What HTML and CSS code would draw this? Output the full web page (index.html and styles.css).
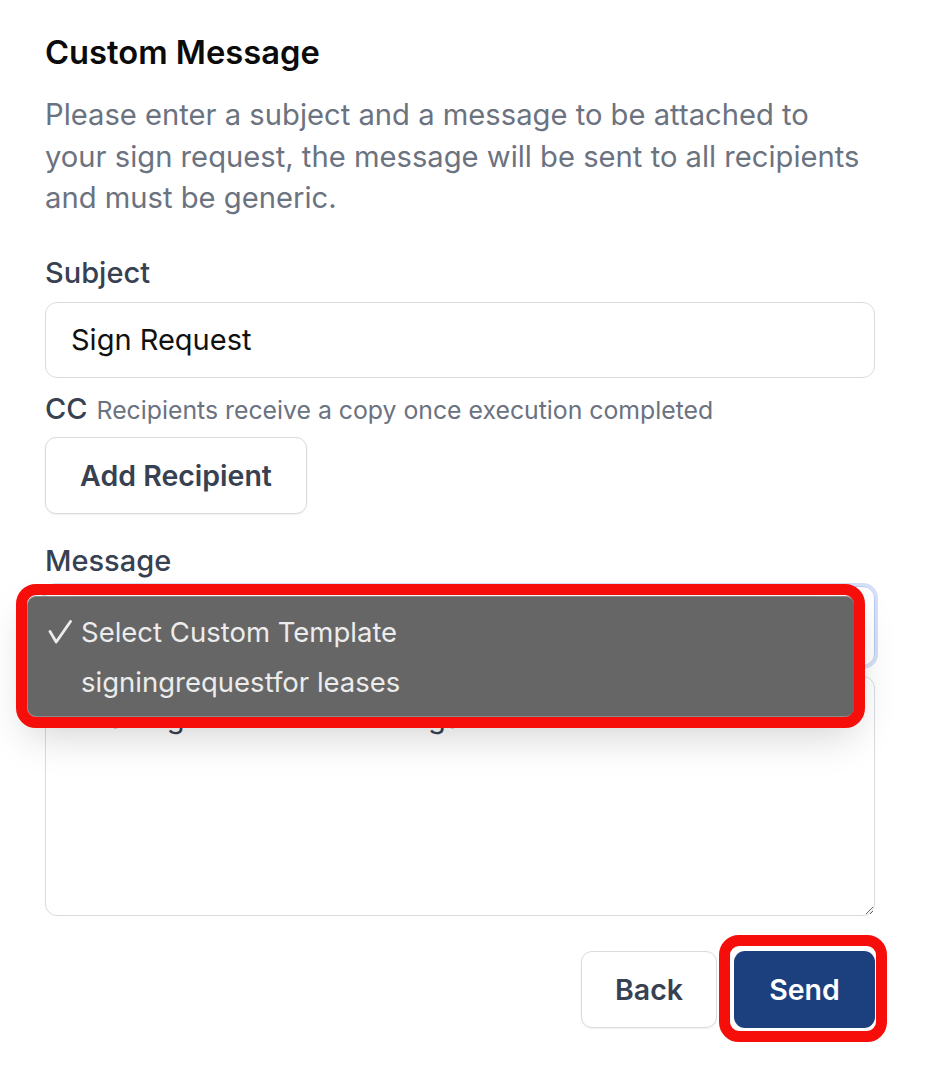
FILE: index.html
```html
<!DOCTYPE html>
<html lang="en">
<head>
  <meta charset="UTF-8">
  <title>Custom Message</title>
  <meta name="viewport" content="width=device-width, initial-scale=1.0">
  <link rel="stylesheet" href="styles.css">
</head>
<body>

<div class="panel">
  <h2>Custom Message</h2>
  <p class="desc">Please enter a subject and a message to be attached to your sign request, the message will be sent to all recipients and must be generic.</p>

  <label class="label" for="subject">Subject</label>
  <input class="input" id="subject" type="text" value="Sign Request">

  <p class="cc"><span class="cc-title">CC</span><span class="cc-hint">Recipients receive a copy once execution completed</span></p>
  <button class="btn btn-light add-btn">Add Recipient</button>

  <label class="label label-message">Message</label>
  <div class="select-wrap">
    
    <div class="select"></div>

    <div class="menu">
      <div class="menu-item">
        <span class="check">
          <svg width="24" height="24" viewBox="0 0 24 24"><path d="M2 11.5 L8.2 22 L22.5 1.5" fill="none" stroke="#ececec" stroke-width="2.8" stroke-linecap="round" stroke-linejoin="round"/></svg>
        </span>Select Custom Template
      </div>
      <div class="menu-item"><span class="check"></span>signingrequestfor leases</div>
    </div>
  </div>

  <textarea class="textarea">Dear signer  review the  legal documents</textarea>

  <div class="actions">
    <button class="btn btn-light">Back</button>
    <button class="btn btn-primary">Send</button>
  </div>
</div>

</body>
</html>
```

FILE: styles.css
```css
* {
  margin: 0;
  padding: 0;
  box-sizing: border-box;
}

html, body {
  background: #ffffff;
  font-family: 'Inter', 'Noto Sans', sans-serif;
  color: #111827;
}

.panel {
  width: 875px;
  padding: 32px 0 40px 45px;
  display: flex;
  flex-direction: column;
  align-items: flex-start;
}

h2 {
  font-size: 32.7px;
  line-height: 40px;
  font-weight: 600;
  color: #0b0b0b;
}

.desc {
  margin-top: 22px;
  font-size: 29.2px;
  line-height: 41.5px;
  color: #6b7280;
  width: 830px;
}

.label {
  display: block;
  margin-top: 36px;
  font-size: 29px;
  line-height: 35px;
  font-weight: 500;
  color: #374151;
}

.input {
  margin-top: 12px;
  width: 830px;
  height: 76px;
  padding: 0 25px;
  border: 1.5px solid #d9dbe0;
  border-radius: 12px;
  font-family: inherit;
  font-size: 29px;
  color: #111111;
  outline: none;
}

.cc {
  margin-top: 13px;
  height: 35px;
  display: flex;
  align-items: baseline;
  gap: 9px;
  line-height: 35px;
}

.cc-title {
  font-size: 29px;
  font-weight: 500;
  color: #374151;
}

.cc-hint {
  font-size: 24.8px;
  color: #6b7280;
}

.btn {
  font-family: inherit;
  font-size: 28.5px;
  font-weight: 600;
  border-radius: 11px;
  cursor: pointer;
  height: 77px;
}

.btn-light {
  background: #ffffff;
  color: #374151;
  border: 1.5px solid #d9dbe0;
  box-shadow: 0 1px 2px rgba(0, 0, 0, 0.06);
}

.add-btn {
  margin-top: 11px;
  width: 262px;
}

.label-message {
  margin-top: 29px;
}

.select-wrap {
  position: relative;
  margin-top: 8px;
  width: 830px;
}

.select {
  height: 80px;
  border: 1.5px solid #b9c9ee;
  border-radius: 12px;
  box-shadow: 0 0 0 3px #d3e0f8;
}

.menu {
  position: absolute;
  left: -18px;
  top: 10px;
  width: 828px;
  height: 121px;
  padding: 10px 0;
  background: #666666;
  border: 1.5px solid #8a8a8a;
  border-radius: 9px;
  box-shadow: 0 18px 40px rgba(0, 0, 0, 0.18);
  z-index: 2;
}

/* red annotation ring */
.menu::after {
  content: "";
  position: absolute;
  top: -12.5px;
  left: -12.5px;
  right: -10.5px;
  bottom: -12.5px;
  border: 11px solid #f50e0a;
  border-radius: 20px;
}

.menu-item {
  display: flex;
  align-items: center;
  height: 50px;
  font-size: 27.5px;
  color: #ececec;
}

.check {
  display: flex;
  align-items: center;
  width: 53px;
  padding-left: 20px;
}

.textarea {
  margin-top: 10px;
  width: 830px;
  height: 240px;
  padding: 21px 25px 10px;
  border: 1.5px solid #d9dbe0;
  border-radius: 12px;
  font-family: inherit;
  font-size: 29px;
  line-height: 40px;
  color: #374151;
  white-space: pre;
  resize: vertical;
  outline: none;
}

.actions {
  margin-top: 35px;
  width: 830px;
  display: flex;
  justify-content: flex-end;
  gap: 17px;
}

.actions .btn-light {
  width: 136px;
}

.btn-primary {
  position: relative;
  width: 141px;
  background: #1c3f7e;
  color: #ffffff;
  border: none;
}

/* red annotation ring */
.btn-primary::after {
  content: "";
  position: absolute;
  top: -16px;
  left: -15px;
  right: -12px;
  bottom: -14px;
  border: 11px solid #f50e0a;
  border-radius: 20px;
}
```
